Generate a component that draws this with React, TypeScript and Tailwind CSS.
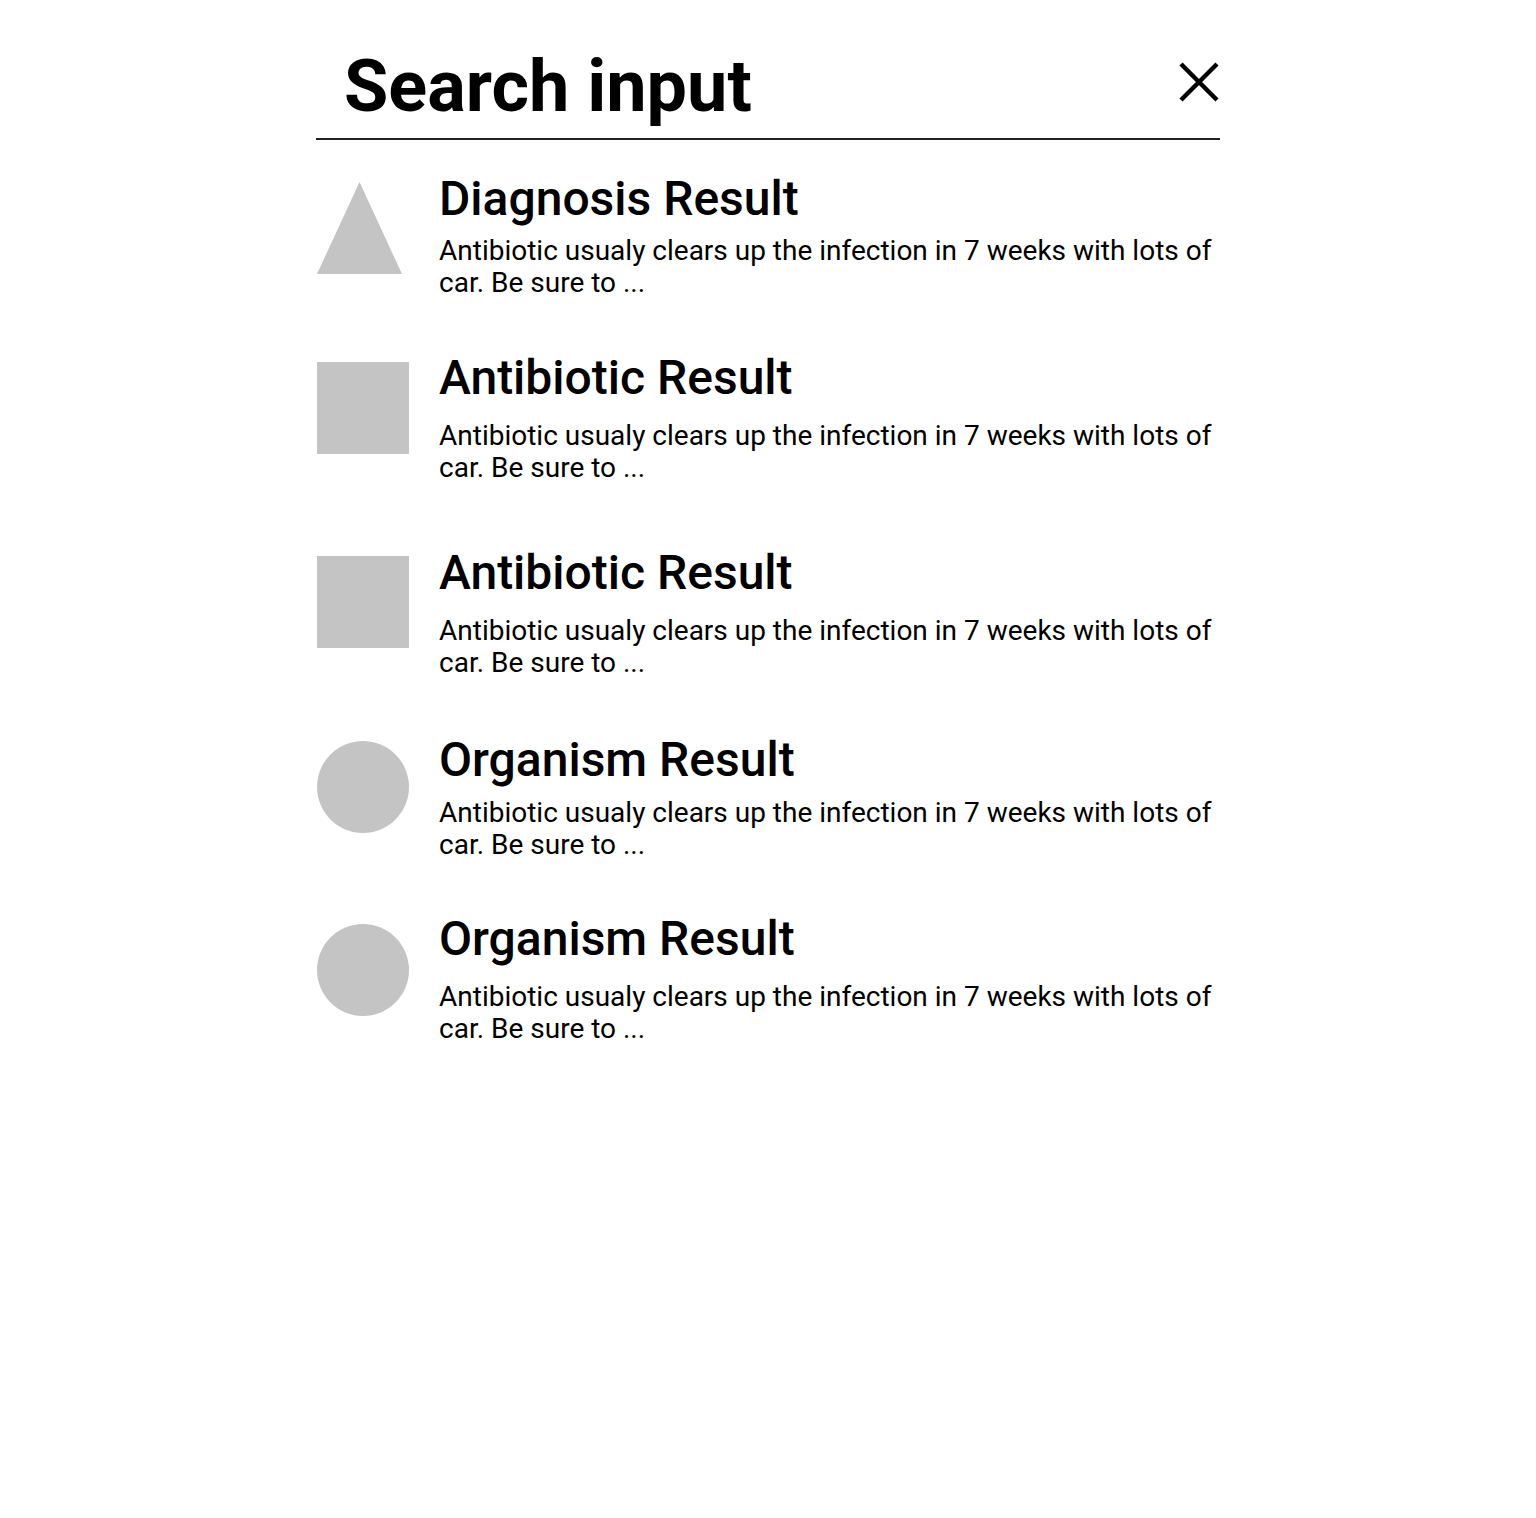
import React from 'react';

type Shape = 'triangle' | 'square' | 'circle';

const results: { id: number; shape: Shape; title: string; rowClass: string; iconClass: string; descClass: string }[] = [
  { id: 1, shape: 'triangle', title: 'Diagnosis Result', rowClass: 'mt-[31px]', iconClass: 'mt-[11px]', descClass: 'mt-[8px]' },
  { id: 2, shape: 'square', title: 'Antibiotic Result', rowClass: 'mt-[51px]', iconClass: 'mt-[12px]', descClass: 'mt-[14px]' },
  { id: 3, shape: 'square', title: 'Antibiotic Result', rowClass: 'mt-[61px]', iconClass: 'mt-[11px]', descClass: 'mt-[14px]' },
  { id: 4, shape: 'circle', title: 'Organism Result', rowClass: 'mt-[53px]', iconClass: 'mt-[9px]', descClass: 'mt-[9px]' },
  { id: 5, shape: 'circle', title: 'Organism Result', rowClass: 'mt-[50px]', iconClass: 'mt-[13px]', descClass: 'mt-[14px]' },
];

const ResultIcon: React.FC<{ shape: Shape }> = ({ shape }) => {
  if (shape === 'triangle') {
    return (
      <svg width="92" height="92" viewBox="0 0 92 92" className="block">
        <polygon points="42.5,0 85,92 0,92" fill="#c4c4c4" />
      </svg>
    );
  }
  if (shape === 'circle') {
    return <div className="w-[92px] h-[92px] rounded-full bg-[#c4c4c4]" />;
  }
  return <div className="w-[92px] h-[92px] bg-[#c4c4c4]" />;
};

export default function App() {
  return (
    <div className="min-h-[1518px] bg-white text-black font-['Roboto',sans-serif]">
      <div className="w-[904px] mx-auto pt-[45px]">
        {/* Search header */}
        <div className="flex items-start justify-between border-b-2 border-[#222] pb-[9px]">
          <h1 className="pl-[28px] text-[72px] leading-[84px] font-bold">Search input</h1>
          <button aria-label="Clear search" className="mt-[17px] mr-[1px]">
            <svg width="40" height="40" viewBox="0 0 40 40" className="block">
              <path d="M2 2 L38 38 M38 2 L2 38" stroke="#000" strokeWidth="4.5" fill="none" />
            </svg>
          </button>
        </div>

        {/* Results */}
        <div className="flex flex-col">
          {results.map((r) => (
            <div key={r.id} className={`flex items-start ${r.rowClass}`}>
              <div className={`w-[123px] pl-[1px] shrink-0 ${r.iconClass}`}>
                <ResultIcon shape={r.shape} />
              </div>
              <div className="flex-1">
                <h2 className="text-[48px] leading-[56px] font-medium">{r.title}</h2>
                <p className={`text-[28px] leading-[32px] ${r.descClass}`}>
                  Antibiotic usualy clears up the infection in 7 weeks with lots of car. Be sure to ...
                </p>
              </div>
            </div>
          ))}
        </div>
      </div>
    </div>
  );
}
